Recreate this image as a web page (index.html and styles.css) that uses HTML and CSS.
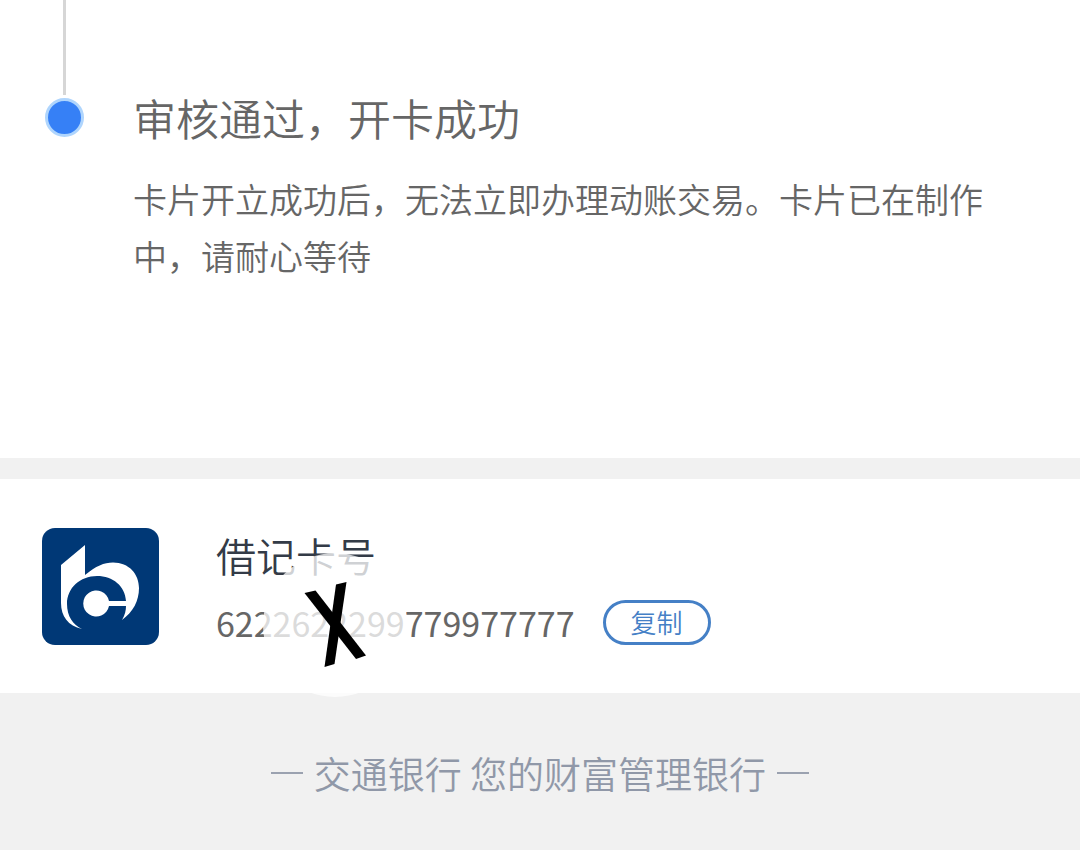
FILE: index.html
```html
<!DOCTYPE html>
<html lang="zh-CN">
<head>
  <meta charset="UTF-8" />
  <meta name="viewport" content="width=device-width, initial-scale=1.0" />
  <title>开卡进度</title>
  <link rel="stylesheet" href="styles.css">
</head>
<body>
  <main>
    <section class="timeline">
      <div class="marker">
        <span class="line"></span>
        <span class="dot"></span>
      </div>
      <div class="step">
        <h2>审核通过，开卡成功</h2>
        <p>卡片开立成功后，无法立即办理动账交易。卡片已在制作中，请耐心等待</p>
      </div>
    </section>

    <section class="card">
      <svg class="logo" viewBox="0 0 117 117" aria-hidden="true">
        <rect width="117" height="117" rx="13" fill="#003876" />
        <path fill="#fff" d="M19 37 L43 17 V47 C54 38 62 34.500 71 34.500 C87 34.500 97 46 97 60 C97 73 91 84 80 92 C83 87 84 82 84 78 H67 A13 13 0 1 1 67 73 H84 C83 58 71 48 55 48 C38 48 25 60 25 76 C25 88 31 97 40 101 C26 98 19 88 19 75 Z" />
      </svg>
      <div class="info">
        <h3>借记卡号</h3>
        <div class="number-row">
          <span class="number" id="cardNumber">6222622299779977777</span>
          <button type="button" class="copyBtn" id="copyBtn">复制</button>
        </div>
        <svg class="mark" viewBox="0 0 144 144" aria-hidden="true">
          <circle cx="72" cy="72" r="72" fill="#fff" fill-opacity="0.77" />
          <path d="M41.500 40 L52.500 37.500 L103 102.500 L93 106 Z" />
          <path d="M73 31.500 L83.500 29 L71.500 111 L61.500 114 Z" />
        </svg>
      </div>
    </section>
  </main>

  <footer>
    <span class="dash"></span>
    <span>交通银行 您的财富管理银行</span>
    <span class="dash"></span>
  </footer>

  <script>
    document.getElementById('copyBtn').addEventListener('click', () => {
      navigator.clipboard.writeText(document.getElementById('cardNumber').textContent);
    });
  </script>
</body>
</html>
```
FILE: styles.css
```css
* {
  box-sizing: border-box;
}

body {
  margin: 0;
  min-height: 100vh;
  font-family: "Noto Sans CJK SC", sans-serif;
  font-weight: 350;
  background-color: #f1f1f1;
  color: #666;
}

h2, h3, p {
  margin: 0;
  font-weight: inherit;
}

.timeline {
  display: flex;
  gap: 49px;
  padding: 0 84px 174px 45px;
  background-color: #fff;
}

.marker {
  display: flex;
  flex-direction: column;
  align-items: center;
  gap: 3px;
}

.line {
  width: 3px;
  height: 95px;
  background-color: #d6d6d6;
}

.dot {
  width: 39px;
  height: 39px;
  border: 3px solid #afd5fd;
  border-radius: 50%;
  background-color: #3680f6;
}

.step {
  flex: 1;
  padding-top: 86px;
}

.step h2 {
  margin-bottom: 22px;
  font-size: 43px;
  line-height: 62px;
}

.step p {
  font-size: 34px;
  line-height: 57px;
}

.card {
  display: flex;
  gap: 57px;
  margin-top: 21px;
  padding: 49px 42px 46px;
  background-color: #fff;
}

.logo {
  width: 117px;
  height: 117px;
  flex-shrink: 0;
}

.info {
  position: relative;
}

.info h3 {
  margin-bottom: 15px;
  font-size: 40px;
  line-height: 54px;
  color: #333b47;
}

.number-row {
  display: flex;
  align-items: center;
  gap: 28px;
}

.number {
  padding-top: 2px;
  font-size: 34px;
  font-weight: 400;
  line-height: 48px;
}

.copyBtn {
  width: 108px;
  height: 45px;
  padding: 0;
  border: 3px solid #4580c6;
  border-radius: 23px;
  background-color: #fff;
  color: #4580c6;
  font-family: inherit;
  font-weight: inherit;
  font-size: 26px;
  line-height: 38px;
  cursor: pointer;
}

/* cross mark laid over the card number */
.mark {
  position: absolute;
  top: 25px;
  left: 47px;
  width: 144px;
  height: 144px;
  pointer-events: none;
}

footer {
  display: flex;
  justify-content: center;
  align-items: center;
  gap: 11px;
  padding: 53px 20px;
  font-size: 37px;
  line-height: 54px;
  color: #9098a8;
}

.dash {
  width: 32px;
  height: 2px;
  background-color: #9ba2b0;
}
```
